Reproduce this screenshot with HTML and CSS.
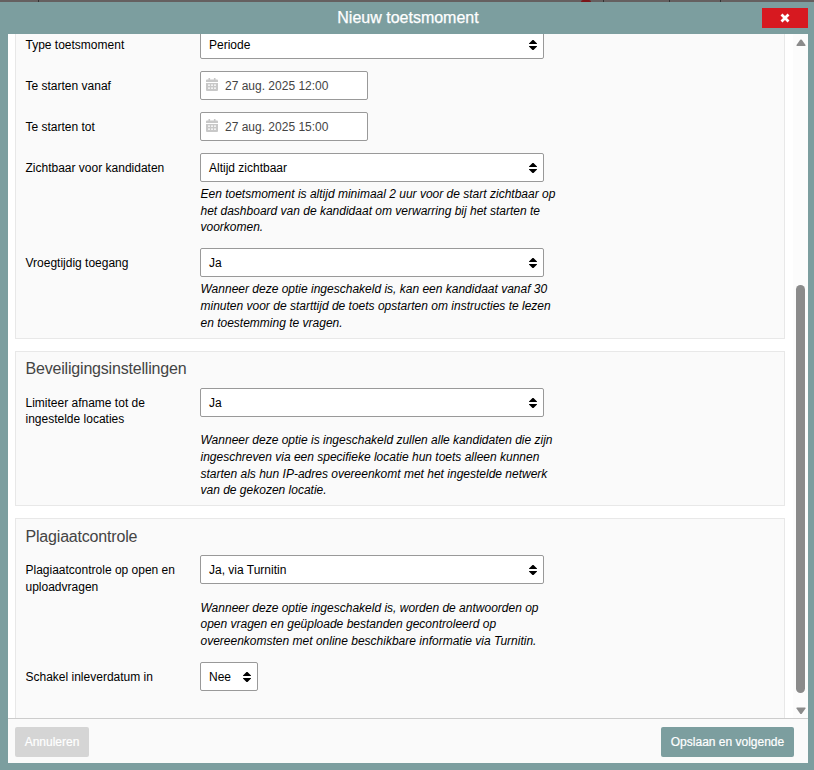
FILE: index.html
```html
<!DOCTYPE html>
<html lang="nl">
<head>
<meta charset="utf-8">
<title>Nieuw toetsmoment</title>
<link rel="stylesheet" href="styles.css">
</head>
<body>
<svg class="defs" width="0" height="0" aria-hidden="true">
  <symbol id="sort" viewBox="0 0 8 10"><path d="M3.500 0h1L8 3.600V4H0v-.4zM3.500 10h1L8 6.400V6H0v.4z"/></symbol>
  <symbol id="cal" viewBox="0 0 12 13"><path fill-rule="evenodd" d="M2.500 0h1.600v1.600h3.800V0h1.600v1.600H11q1 0 1 1V4H0V2.600q0-1 1-1h1.500zM0 5h12v7q0 1-1 1H1q-1 0-1-1zM2 6.500v1.200h2V6.500zm3 0v1.200h2V6.500zm3 0v1.200h2V6.500zM2 9.500v1.200h2V9.500zm3 0v1.200h2V9.500zm3 0v1.200h2V9.500z"/></symbol>
</svg>
<div class="backdrop"><i class="line l1"></i><i class="mark"></i><i class="line l2"></i><i class="line l3"></i><i class="line l4"></i></div>
<div class="dialog">
  <header class="titlebar">
    <h1>Nieuw toetsmoment</h1>
    <button class="close" aria-label="Sluiten"><svg width="10" height="10" viewBox="0 0 10 10"><path d="M1.500 1.500 8.500 8.500M8.500 1.500 1.500 8.500"/></svg></button>
  </header>
  <main class="content">
    <div class="panels">
      <section class="panel first">
        <div class="row"><label>Type toetsmoment</label><div class="field"><div class="select">Periode<svg><use href="#sort"/></svg></div></div></div>
        <div class="row"><label>Te starten vanaf</label><div class="field"><div class="date"><svg><use href="#cal"/></svg>27 aug. 2025 12:00</div></div></div>
        <div class="row"><label>Te starten tot</label><div class="field"><div class="date"><svg><use href="#cal"/></svg>27 aug. 2025 15:00</div></div></div>
        <div class="row"><label>Zichtbaar voor kandidaten</label><div class="field"><div class="select">Altijd zichtbaar<svg><use href="#sort"/></svg></div>
          <p class="help">Een toetsmoment is altijd minimaal 2 uur voor de start zichtbaar op<br>het dashboard van de kandidaat om verwarring bij het starten te<br>voorkomen.</p></div></div>
        <div class="row"><label>Vroegtijdig toegang</label><div class="field"><div class="select">Ja<svg><use href="#sort"/></svg></div>
          <p class="help tight">Wanneer deze optie ingeschakeld is, kan een kandidaat vanaf 30<br>minuten voor de starttijd de toets opstarten om instructies te lezen<br>en toestemming te vragen.</p></div></div>
      </section>
      <section class="panel second">
        <h2>Beveiligingsinstellingen</h2>
        <div class="row"><label>Limiteer afname tot de<br>ingestelde locaties</label><div class="field"><div class="select">Ja<svg><use href="#sort"/></svg></div>
          <p class="help spaced">Wanneer deze optie is ingeschakeld zullen alle kandidaten die zijn<br>ingeschreven via een specifieke locatie hun toets alleen kunnen<br>starten als hun IP-adres overeenkomt met het ingestelde netwerk<br>van de gekozen locatie.</p></div></div>
      </section>
      <section class="panel third">
        <h2>Plagiaatcontrole</h2>
        <div class="row"><label>Plagiaatcontrole op open en<br>uploadvragen</label><div class="field"><div class="select">Ja, via Turnitin<svg><use href="#sort"/></svg></div>
          <p class="help spaced">Wanneer deze optie ingeschakeld is, worden de antwoorden op<br>open vragen en geüploade bestanden gecontroleerd op<br>overeenkomsten met online beschikbare informatie via Turnitin.</p></div></div>
        <div class="row"><label>Schakel inleverdatum in</label><div class="field"><div class="select small">Nee<svg><use href="#sort"/></svg></div></div></div>
      </section>
    </div>
    <div class="scrollbar">
      <svg width="10" height="8" viewBox="0 0 10 8"><path d="M4.200.8Q5 0 5.800.8L9.500 6Q9.800 7 9 7H1Q.2 7 .5 6z"/></svg>
      <div class="thumb"></div>
      <svg width="10" height="8" viewBox="0 0 10 8"><path d="M4.200 6.700Q5 7.500 5.800 6.700L9.500 1.500Q9.800.5 9 .5H1Q.2.5.5 1.500z"/></svg>
    </div>
  </main>
  <footer class="footer"><button class="btn cancel">Annuleren</button><button class="btn save">Opslaan en volgende</button></footer>
</div>
</body>
</html>
```
FILE: styles.css
```css
* { box-sizing: border-box; }
body { margin: 0; height: 770px; overflow: hidden; display: flex; flex-direction: column; background: #7c9e9f; font: 12px/16.8px "Liberation Sans", Arial, sans-serif; color: #000; }
.defs { position: absolute; }
.backdrop { flex: none; height: 2px; background: #656060; display: flex; }
.line { width: 1px; height: 2px; background: #343434; }
.l1 { margin-left: 38px; }
.mark { width: 10px; height: 2px; margin-left: 542px; background: #7b1518; border-radius: 4px 4px 0 0; }
.l2 { margin-left: 12px; }
.l3 { margin-left: 65px; }
.l4 { margin-left: 50px; }
.dialog { height: 768px; padding: 0 6px 7px 8px; display: flex; flex-direction: column; }
.titlebar { height: 32px; flex: none; display: grid; grid-template-columns: 46px 1fr 46px; align-items: center; }
h1 { grid-column: 2; margin: 0; text-align: center; font-size: 16px; font-weight: 400; line-height: 20px; color: #fff; -webkit-text-stroke: .25px #fff; }
.close { width: 46px; height: 20px; margin: 0; padding: 0; border: 0; background: #d71920; display: flex; align-items: center; justify-content: center; }
.close svg { fill: none; stroke: #fff; stroke-width: 2.8; margin-top: -1px; }
.content { height: 684px; flex: none; display: flex; overflow: hidden; background: #fff; }
.panels { width: 785px; padding: 0 8px 0 7px; }
.panel { border: 1px solid #e8e8e8; background: #fafafa; padding: 0 10px 0 9.500px; margin-bottom: 12px; }
.first { height: 309px; margin-top: -4px; border-top: 0; }
.second { height: 155px; }
.third { height: 220px; }
h2 { margin: 0; height: 36px; padding-top: 6px; font-size: 16px; line-height: 22px; font-weight: 400; letter-spacing: -.19px; color: #444; }
.third h2 { padding-top: 7px; }
.row { display: flex; margin-bottom: 12px; }
label { width: 174.500px; flex: none; padding-top: 6.600px; white-space: nowrap; }
.third label { padding-top: 7px; }
.select, .date { height: 29px; width: 344px; display: flex; align-items: center; justify-content: space-between; border: 1px solid #999; border-radius: 2px; background: #fff; padding: 1px 6px 0 8px; }
.select svg { width: 8px; height: 10px; }
.small { width: 58px; }
.date { width: 168px; justify-content: flex-start; padding-left: 5px; gap: 7px; color: #444; }
.date svg { width: 12px; height: 13px; fill: #c8c8c8; margin-top: -3px; }
.help { margin: 3.800px 0 -.2px .5px; font-style: italic; white-space: nowrap; }
.help.tight { margin-top: 4px; letter-spacing: 0; }
.help.spaced { margin-top: 15px; margin-bottom: 0; }
.third .help.spaced { margin-top: 15.600px; }
.scrollbar { width: 15px; padding: 5px 3px 3px; background: #fcfcfc; display: flex; flex-direction: column; align-items: flex-start; }
.scrollbar svg { fill: #8b8b8b; flex: none; }
.thumb { width: 9px; height: 408px; margin: 238px 0 auto; border-radius: 5px; background: #8b8b8b; }
.footer { height: 45px; flex: none; border-top: 1px solid #ccc; background: #fafafa; display: flex; justify-content: space-between; padding: 8px 14px 0 7px; }
.btn { height: 30px; padding: 0; border: 0; border-radius: 2px; color: #fff; font: inherit; -webkit-text-stroke: .2px #fff; }
.cancel { width: 74px; background: #d5d5d5; }
.save { width: 133px; background: #7c9e9f; }
```
